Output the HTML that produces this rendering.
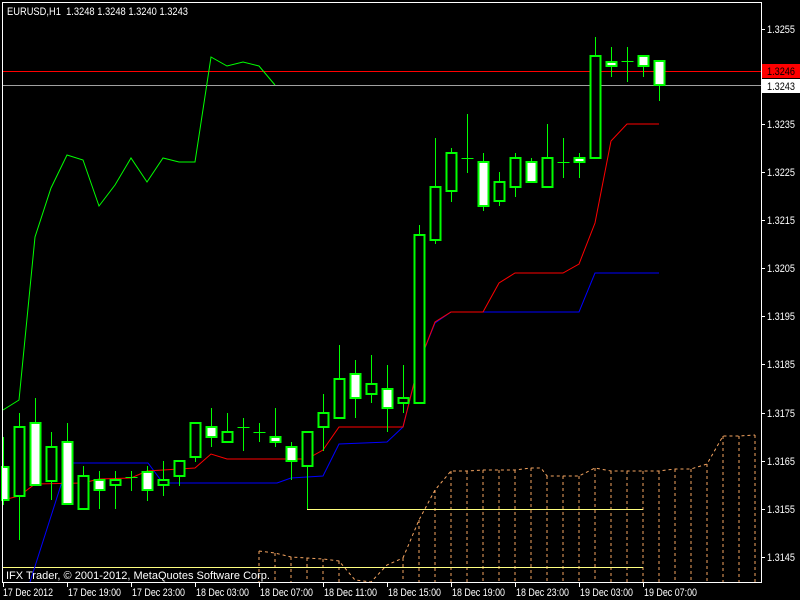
<!DOCTYPE html>
<html><head><meta charset="utf-8"><style>
html,body{margin:0;padding:0;background:#000;width:800px;height:600px;overflow:hidden}
svg{display:block}
text{font-family:"Liberation Sans",sans-serif;font-size:11px;fill:#fff;white-space:pre}
</style></head><body>
<svg id="s" width="800" height="600" xmlns="http://www.w3.org/2000/svg" shape-rendering="crispEdges">
<rect width="800" height="600" fill="#000"/>
<g id="g"></g>
</svg>
<script>
(function(){
var g=document.getElementById('g'),h='';
function L(x1,y1,x2,y2,c,w,d){h+='<line x1="'+x1+'" y1="'+y1+'" x2="'+x2+'" y2="'+y2+'" stroke="'+c+'" stroke-width="'+(w||1)+'"'+(d?' stroke-dasharray="'+d+'"':'')+'/>';}
function P(pts,c,d){h+='<polyline fill="none" stroke="'+c+'" stroke-width="1" shape-rendering="auto"'+(d?' stroke-dasharray="'+d+'"':'')+' points="'+pts.map(function(p){return p.join(',')}).join(' ')+'"/>';}
function T(x,y,t,c,tl){h+='<text x="'+x+'" y="'+y+'"'+(c?' style="fill:'+c+'"':'')+(tl?' textLength="'+tl+'" lengthAdjust="spacingAndGlyphs"':'')+'>'+t+'</text>';}
var ta=[[403,558],[419,520],[435,490],[451,471],[467,471],[483,470],[499,470],[515,470],[531,468],[541,468],[547,476],[563,476],[579,476],[595,468],[611,471],[627,471],[643,471],[659,471],[675,469],[691,469],[707,464],[723,436],[739,436],[755,435]];
P(ta,'#f4a460','3,3');
function yat(arr,x){for(var i=0;i<arr.length-1;i++){if(x>=arr[i][0]&&x<=arr[i+1][0]){var t=(x-arr[i][0])/(arr[i+1][0]-arr[i][0]);return arr[i][1]+t*(arr[i+1][1]-arr[i][1]);}}return arr[arr.length-1][1];}
for(var x=403;x<=755;x+=16)L(x,yat(ta,x),x,582,'#f4a460',1,'3,3');
var ta2=[[259,551],[275,553],[291,557],[323,559],[339,561],[355,580],[371,582],[387,565],[403,558]];
P(ta2,'#f4a460','3,3');
for(var x=259;x<=339;x+=16)L(x,yat(ta2,x),x,582,'#f4a460',1,'3,3');
L(307,509.5,643,509.5,'#ffff80');L(3,567.5,643,567.5,'#ffff80');
L(3,71.5,761,71.5,'#ff0000');L(3,85.5,761,85.5,'#a0a0a0');
P([[3,410],[19,400],[35,237],[51,188],[67,155],[83,160],[99,206],[115,185],[131,158],[147,182],[163,158],[179,162],[195,162],[211,57],[227,66],[243,62],[259,66],[275,85]],'#00ff00');
P([[30,582],[68,463],[148,463],[163,483],[277,483],[291,478],[323,476],[339,444],[387,442],[403,427],[419,363],[435,323],[451,312],[579,312],[595,273],[659,273]],'#0000ff');
P([[3,500],[19,496],[35,484],[83,483],[99,479],[131,478],[147,471],[195,468],[211,454],[227,459],[307,459],[323,450],[339,427],[403,427],[419,363],[435,322],[451,312],[483,312],[499,283],[515,273],[563,273],[579,264],[595,223],[611,141],[627,124],[659,124]],'#ff0000');
var C=[['W',467,500,437,505],['H',427,496,413,540],['W',423,485,398,485],['H',447,481,432,500],['W',442,504,423,504],['H',476,509,466,509],['W',480,490,471,509],['H',480,485,471,509],['X',477,477,471,491],['W',472,490,466,501],['H',480,485,461,496],['H',461,476,461,486],['H',423,457,423,462],['W',427,437,408,447],['H',432,442,413,442],['X',427,427,418,451],['X',432,432,423,442],['W',437,442,408,447],['W',447,461,442,480],['H',432,466,432,509],['H',413,427,394,451],['H',379,418,345,418],['W',374,398,360,418],['H',384,394,355,403],['W',389,408,365,432],['H',398,403,365,413],['H',235,403,225,403],['H',187,240,138,244],['H',153,191,148,202],['X',158,158,114,173],['W',162,206,153,211],['H',182,201,172,206],['H',158,187,153,197],['W',162,182,158,182],['H',158,187,124,187],['X',162,162,138,178],['W',158,162,153,178],['H',56,158,37,158],['W',62,66,47,77],['X',61,61,47,82],['W',56,66,56,77],['W',61,85,61,101]];
C.forEach(function(c,k){var x=3+16*k+0.5;
 L(x,c[3],x,c[4],'#00ff00');
 if(c[0]=='X'){L(x-6,c[1]+0.5,x+6,c[1]+0.5,'#00ff00');return;}
 var x0=Math.max(2,x-5);
 h+='<rect x="'+x0+'" y="'+c[1]+'" width="'+(x+5-x0)+'" height="'+Math.max(2,c[2]-c[1])+'" fill="'+(c[0]=='W'?'#fff':'#000')+'" stroke="#00ff00" stroke-width="2"/>';
});
h+='<rect x="0" y="583" width="800" height="17" fill="#000"/>';
h+='<rect x="762" y="0" width="38" height="600" fill="#000"/>';
L(2.5,2,2.5,583,'#fff');L(2,2.5,762,2.5,'#fff');L(761.5,2,761.5,583,'#fff');L(2,582.5,762,582.5,'#fff');
var pl=[['1.3255',29],['1.3235',124],['1.3225',172],['1.3215',220],['1.3205',268],['1.3195',316],['1.3185',364],['1.3175',413],['1.3165',461],['1.3155',509],['1.3145',557]];
pl.forEach(function(p){L(762,p[1]+0.5,765,p[1]+0.5,'#fff');T(767,p[1]+4,p[0],0,28);});
h+='<rect x="762" y="64" width="38" height="14" fill="#ff0000"/>';T(767,75,'1.3246','#000',28);
h+='<rect x="762" y="79" width="38" height="14" fill="#fff"/>';T(767,90,'1.3243','#000',28);
var tl=['17 Dec 2012','17 Dec 19:00','17 Dec 23:00','18 Dec 03:00','18 Dec 07:00','18 Dec 11:00','18 Dec 15:00','18 Dec 19:00','18 Dec 23:00','19 Dec 03:00','19 Dec 07:00'];
tl.forEach(function(t,i){var x=3+64*i;L(x+0.5,583,x+0.5,587,'#fff');T(x+(i?1:0),596,t,0,i?53:50);});
T(6,579,'IFX Trader, © 2001-2012, MetaQuotes Software Corp.',0,264);
T(7,15,'EURUSD,H1  1.3248 1.3248 1.3240 1.3243',0,181);
g.innerHTML=h;
})();
</script>
</body></html>
